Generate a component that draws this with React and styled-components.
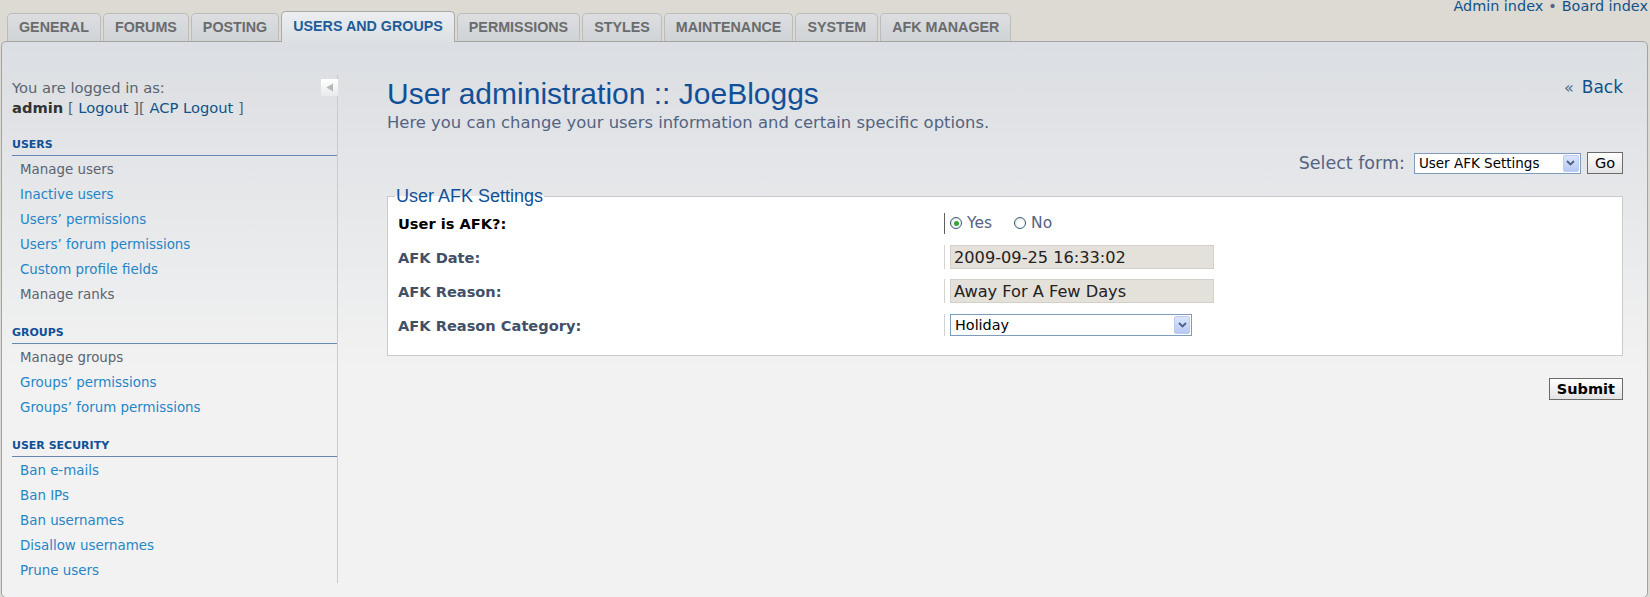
import React from 'react'
import styled, { createGlobalStyle } from 'styled-components';

const verdana = `"DejaVu Sans", Verdana, sans-serif`;
const arial = `"Liberation Sans", Arial, sans-serif`;

const GlobalStyle = createGlobalStyle`
  html, body {
    margin: 0;
    padding: 0;
  }
  body {
    background: #dddad3;
    font-family: ${verdana};
    color: #536482;
    overflow: hidden;
  }
  a {
    text-decoration: none;
  }
`;

const Header = styled.div`
  position: relative;
  z-index: 1;
  display: flex;
  justify-content: space-between;
  align-items: flex-end;
  height: 41px;
  padding-left: 7px;
`;

const Tabs = styled.ul`
  display: flex;
  align-items: flex-end;
  gap: 2px;
  margin: 0;
  padding: 0;
  list-style: none;
`;

const Tab = styled.li`
  box-sizing: border-box;
  height: ${({ $active }) => ($active ? 31 : 28)}px;
  margin-bottom: ${({ $active }) => ($active ? -1 : 0)}px;
  padding: 0 11px;
  border: 1px solid ${({ $active }) => ($active ? '#a9a9a9' : '#bcbcbc')};
  border-bottom: none;
  border-radius: 5px 5px 0 0;
  background: ${({ $active }) =>
    $active ? 'linear-gradient(#eceef0, #dde0e4)' : 'linear-gradient(#dcdee0, #d0d3d6)'};
  font-family: ${arial};
  font-size: 14.3px;
  font-weight: bold;
  line-height: ${({ $active }) => ($active ? 29 : 27)}px;
  color: ${({ $active }) => ($active ? '#1d5c98' : '#6a6b6d')};
  white-space: nowrap;
`;

const TopLinks = styled.div`
  align-self: flex-start;
  padding-right: 2px;
  font-size: 14.4px;
  line-height: 13px;
  color: #105289;
`;

const Bullet = styled.span`
  color: #536482;
  margin: 0 5px;
`;

const Panel = styled.div`
  display: flex;
  margin: 0 2px 0 1px;
  border: 1px solid #a4a4a4;
  border-radius: 5px;
  background: linear-gradient(#dbdee2 0px, #f2f2f2 330px, #f2f2f2);
`;

const Sidebar = styled.div`
  position: relative;
  box-sizing: border-box;
  width: 336px;
  flex-shrink: 0;
  margin: 33px 0 14px;
  padding: 3px 0 0 10px;
  border-right: 1px solid #c9cbcf;
`;

const Collapse = styled.button`
  position: absolute;
  top: 4px;
  right: -1px;
  width: 17px;
  height: 17px;
  padding: 0;
  border: none;
  background: linear-gradient(#ffffff, #e9eaec);
  display: flex;
  align-items: center;
  justify-content: center;
`;

const Intro = styled.div`
  font-size: 14.7px;
  line-height: 20px;
  color: #5a6470;
`;

const Strong = styled.b`
  color: #333;
`;

const BlueLink = styled.a`
  color: #105289;
`;

const MenuHead = styled.div`
  margin-top: ${({ $first }) => ($first ? 20 : 19)}px;
  padding-bottom: 3px;
  border-bottom: 1px solid #6389b0;
  font-size: 11px;
  font-weight: bold;
  line-height: 14px;
  color: #115098;
`;

const MenuList = styled.ul`
  margin: 1px 0 0;
  padding: 0 0 0 8px;
  list-style: none;
`;

const MenuItem = styled.li`
  font-size: 13.4px;
  line-height: 25px;
  color: ${({ $visited }) => ($visited ? '#5a6470' : '#2585c6')};
`;

const Main = styled.div`
  flex: 1;
  padding: 35px 24px 0 49px;
`;

const TitleRow = styled.div`
  display: flex;
  justify-content: space-between;
  align-items: flex-start;
`;

const Title = styled.h1`
  margin: 0;
  font-family: ${arial};
  font-size: 30px;
  font-weight: normal;
  line-height: 34px;
  color: #115098;
`;

const Subtitle = styled.p`
  margin: 2px 0 0;
  font-size: 16.4px;
  line-height: 20px;
  color: #536482;
`;

const Back = styled.a`
  font-size: 17px;
  line-height: 20px;
  color: #105289;
  span {
    font-size: 16px;
    color: #4a6d94;
    margin-right: 8px;
  }
`;

const SelectRow = styled.div`
  display: flex;
  justify-content: flex-end;
  align-items: center;
  height: 22px;
  margin-top: 19px;
`;

const SelectLabel = styled.label`
  margin-right: 9px;
  font-size: 17.5px;
  color: #536482;
`;

const FakeSelect = styled.div`
  box-sizing: border-box;
  display: flex;
  align-items: center;
  justify-content: space-between;
  width: ${({ $w }) => $w}px;
  height: ${({ $h }) => $h}px;
  padding: 1px 1px 1px 4px;
  border: 1px solid #7f9db9;
  background: #fff;
  font-size: ${({ $fs }) => $fs}px;
  color: #000;
`;

const ArrowBox = styled.span`
  box-sizing: border-box;
  width: 16px;
  height: 100%;
  display: flex;
  align-items: center;
  justify-content: center;
  border: 1px solid #bccbf0;
  border-radius: 2px;
  background: linear-gradient(#dbe5fb, #b6c9f2);
`;

const Button = styled.button`
  box-sizing: border-box;
  height: ${({ $h }) => $h}px;
  margin-left: ${({ $ml }) => $ml || 0}px;
  padding: 0 ${({ $px }) => $px}px;
  border: 1px solid #6b6b6b;
  background: linear-gradient(#ffffff, #e3e3e3);
  font-family: ${verdana};
  font-size: 14.5px;
  font-weight: ${({ $bold }) => ($bold ? 'bold' : 'normal')};
  color: #000;
`;

const Fieldset = styled.fieldset`
  margin: 13px 0 0;
  padding: 1px 10px 13px;
  border: 1px solid #cacaca;
  background: #fff;
  min-width: 0;
`;

const Legend = styled.legend`
  margin-left: -3px;
  padding: 0 1px;
  font-family: ${arial};
  font-size: 18px;
  line-height: 18px;
  color: #115098;
`;

const Row = styled.div`
  display: grid;
  grid-template-columns: 546px 1fr;
  align-items: center;
  height: 34px;
`;

const Label = styled.label`
  font-size: 14.6px;
  font-weight: bold;
  color: ${({ $strong }) => ($strong ? '#000' : '#425067')};
`;

const Field = styled.div`
  display: flex;
  align-items: center;
  height: ${({ $h }) => $h}px;
  padding-left: 5px;
  border-left: 1px solid ${({ $dark }) => ($dark ? '#5e5e5e' : '#d2d2d2')};
`;

const TextBox = styled.input`
  box-sizing: border-box;
  width: 264px;
  height: 24px;
  padding: 0 3px;
  border: 1px solid #d4d0c9;
  background: #e4e0da;
  font-family: ${verdana};
  font-size: 16.2px;
  color: #222;
  outline: none;
`;

const RadioOption = styled.label`
  display: flex;
  align-items: center;
  gap: 5px;
  margin-right: 22px;
  font-size: 15.5px;
  color: #536482;
`;

const Radio = styled.span`
  box-sizing: border-box;
  width: 12px;
  height: 12px;
  border-radius: 50%;
  border: 1px solid #37597d;
  background: radial-gradient(circle at 60% 60%, #ffffff 30%, #dcdcd6);
  display: flex;
  align-items: center;
  justify-content: center;
  &::after {
    content: '';
    width: 5px;
    height: 5px;
    border-radius: 50%;
    background: ${({ $checked }) => ($checked ? '#32a537' : 'transparent')};
  }
`;

const SubmitRow = styled.div`
  display: flex;
  justify-content: flex-end;
  margin-top: 22px;
`;

const tabs = ['GENERAL', 'FORUMS', 'POSTING', 'USERS AND GROUPS', 'PERMISSIONS', 'STYLES', 'MAINTENANCE', 'SYSTEM', 'AFK MANAGER'];

const menu = [
  {
    title: 'USERS',
    items: [
      ['Manage users', true],
      ['Inactive users'],
      ['Users’ permissions'],
      ['Users’ forum permissions'],
      ['Custom profile fields'],
      ['Manage ranks', true],
    ],
  },
  {
    title: 'GROUPS',
    items: [['Manage groups', true], ['Groups’ permissions'], ['Groups’ forum permissions']],
  },
  {
    title: 'USER SECURITY',
    items: [['Ban e-mails'], ['Ban IPs'], ['Ban usernames'], ['Disallow usernames'], ['Prune users']],
  },
];

const Chevron = () => (
  <svg width="9" height="6" viewBox="0 0 9 6">
    <path d="M1 1 L4.5 4.5 L8 1" fill="none" stroke="#4d6185" strokeWidth="1.8" />
  </svg>
);

const App = () => {
  return (
    <>
      <GlobalStyle />
      <Header>
        <Tabs>
          {tabs.map((t) => (
            <Tab key={t} $active={t === 'USERS AND GROUPS'}>{t}</Tab>
          ))}
        </Tabs>
        <TopLinks>
          <span>Admin index</span>
          <Bullet>•</Bullet>
          <span>Board index</span>
        </TopLinks>
      </Header>
      <Panel>
        <Sidebar>
          <Collapse aria-label="Collapse menu">
            <svg width="8" height="9" viewBox="0 0 8 9">
              <path d="M7 0.5 L0.5 4.5 L7 8.5 Z" fill="#b4b6b9" />
            </svg>
          </Collapse>
          <Intro>You are logged in as:</Intro>
          <Intro>
            <Strong>admin</Strong> [ <BlueLink href="#">Logout</BlueLink> ][ <BlueLink href="#">ACP Logout</BlueLink> ]
          </Intro>
          {menu.map((group, i) => (
            <div key={group.title}>
              <MenuHead $first={i === 0}>{group.title}</MenuHead>
              <MenuList>
                {group.items.map(([label, visited]) => (
                  <MenuItem key={label} $visited={visited}>{label}</MenuItem>
                ))}
              </MenuList>
            </div>
          ))}
        </Sidebar>
        <Main>
          <TitleRow>
            <div>
              <Title>User administration :: JoeBloggs</Title>
              <Subtitle>Here you can change your users information and certain specific options.</Subtitle>
            </div>
            <Back href="#"><span>«</span>Back</Back>
          </TitleRow>
          <SelectRow>
            <SelectLabel>Select form:</SelectLabel>
            <FakeSelect $w={167} $h={21} $fs={13.5}>
              User AFK Settings
              <ArrowBox><Chevron /></ArrowBox>
            </FakeSelect>
            <Button $h={22} $px={7} $ml={6}>Go</Button>
          </SelectRow>
          <Fieldset>
            <Legend>User AFK Settings</Legend>
            <Row>
              <Label $strong>User is AFK?:</Label>
              <Field $h={21} $dark>
                <RadioOption><Radio $checked />Yes</RadioOption>
                <RadioOption><Radio />No</RadioOption>
              </Field>
            </Row>
            <Row>
              <Label>AFK Date:</Label>
              <Field $h={24}>
                <TextBox readOnly value="2009-09-25 16:33:02" />
              </Field>
            </Row>
            <Row>
              <Label>AFK Reason:</Label>
              <Field $h={24}>
                <TextBox readOnly value="Away For A Few Days" />
              </Field>
            </Row>
            <Row>
              <Label>AFK Reason Category:</Label>
              <Field $h={22}>
                <FakeSelect $w={242} $h={22} $fs={14.4}>
                  Holiday
                  <ArrowBox><Chevron /></ArrowBox>
                </FakeSelect>
              </Field>
            </Row>
          </Fieldset>
          <SubmitRow>
            <Button $h={22} $px={7} $bold>Submit</Button>
          </SubmitRow>
        </Main>
      </Panel>
    </>
  )
}

export default App
